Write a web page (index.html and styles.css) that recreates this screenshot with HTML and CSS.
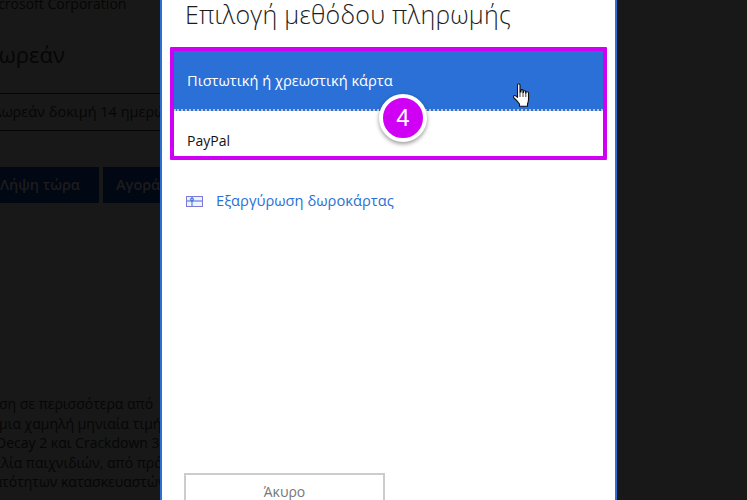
FILE: index.html
```html
<!DOCTYPE html>
<html lang="el">
<head>
<meta charset="utf-8">
<title>Επιλογή μεθόδου πληρωμής</title>
<link rel="stylesheet" href="styles.css">
</head>
<body>
<div class="screen">
  <div class="backdrop">
    <div class="publisher">Microsoft Corporation</div>
    <div class="price">Δωρεάν</div>
    <div class="trial">Δωρεάν δοκιμή 14 ημερών</div>
    <div class="actions">
      <span class="dark-btn first">Λήψη τώρα</span>
      <span class="dark-btn second">Αγορά</span>
    </div>
    <div class="para">
      <div class="line-a">Απόκτηση σε περισσότερα από</div>
      <div class="line-b">με μια χαμηλή μηνιαία τιμή</div>
      <div class="line-c">Decay 2 και Crackdown 3</div>
      <div class="line-d">ποικιλία παιχνιδιών, από πρό</div>
      <div class="line-e">δυνατότητων κατασκευαστών</div>
    </div>
  </div>
  <main class="dialog">
    <h1 class="title">Επιλογή μεθόδου πληρωμής</h1>
    <div class="methods">
      <div class="method selected">Πιστωτική ή χρεωστική κάρτα</div>
      <div class="method">PayPal</div>
      <div class="badge">4</div>
      <svg class="hand" width="17" height="24" viewBox="0 0 17 24">
        <path d="M4.500 2C4.500.3 7 .3 7 2V9H8V7.500C8 6.300 10 6.300 10 7.500V9.500H10.500V8.500C10.500 7.400 12.600 7.400 12.600 8.500V10H13V9.500C13 8.400 15.500 8.400 15.500 9.800V16.500C15.500 18.500 15 19.500 14.500 21V23.300H6.500V21C5 19 3 16.500 1 15C-.2 13.500 1 12 2.500 12.700C3.200 13 3.900 13.600 4.500 14.300Z" fill="#fff" stroke="#101010" stroke-width="1.100" stroke-linejoin="round"/>
        <path d="M7 9v5M10 9.500v4.500M12.800 10v4" fill="none" stroke="#101010" stroke-width=".8"/>
      </svg>
    </div>
    <a class="gift" href="#">
      <svg class="gift-icon" width="17" height="11" viewBox="0 0 17 11">
        <rect x=".5" y=".5" width="16" height="10" fill="#eef2fb" stroke="#7f78d8"/>
        <path d="M1 5h15M6 1v9" fill="none" stroke="#3a6fd8"/>
        <circle cx="6" cy="3.500" r="1.600" fill="none" stroke="#3a6fd8"/>
      </svg>
      <span>Εξαργύρωση δωροκάρτας</span>
    </a>
    <div class="spacer"></div>
    <button class="cancel" type="button">Άκυρο</button>
  </main>
  <div class="backdrop-right"></div>
</div>
</body>
</html>
```

FILE: styles.css
```css
* { box-sizing: border-box; }
html, body { margin: 0; padding: 0; }
body { font-family: "Open Sans", "Noto Sans", sans-serif; background: #181818; }

.screen {
  width: 747px;
  height: 500px;
  overflow: hidden;
  display: grid;
  grid-template-columns: 160px 457px 130px;
}

.backdrop {
  background: #181818;
  color: #060606;
  overflow: hidden;
  white-space: nowrap;
  display: flex;
  flex-direction: column;
}
.publisher { font-size: 14px; line-height: 20px; margin: -6px 0 0 -18px; }
.price { font-size: 22px; line-height: 28px; margin: 26px 0 0 -14px; }
.trial {
  font-size: 14.5px;
  line-height: 36px;
  height: 38px;
  margin: 25px 0 0 -20px;
  padding-left: 20px;
  border-top: 1px solid #050505;
  border-bottom: 1px solid #050505;
  text-indent: -7px;
}
.actions { display: flex; gap: 4px; margin: 36px 0 0 -20px; }
.dark-btn {
  height: 36px;
  background: #010713;
  color: #1d1d1d;
  font-size: 14.5px;
  font-weight: 600;
  line-height: 35px;
  flex: none;
}
.dark-btn.first { width: 119px; padding-left: 20px; }
.dark-btn.second { width: 80px; padding-left: 13px; }
.para { font-size: 14px; line-height: 19.5px; margin-top: 191px; }
.line-a { margin-left: -50px; }
.line-b { margin-left: -20px; }
.line-c { margin-left: -4px; }
.line-d { margin-left: -33px; }
.line-e { margin-left: -31px; }

.backdrop-right { background: #181818; }

.dialog {
  background: #fff;
  border-left: 2px solid #2a70d6;
  border-right: 2px solid #2a70d6;
  height: 500px;
  display: flex;
  flex-direction: column;
}
.title {
  margin: -6px 0 0 23px;
  font-size: 25px;
  line-height: 40px;
  font-weight: 300;
  color: #1c1c1c;
  letter-spacing: .25px;
  white-space: nowrap;
}
.methods {
  position: relative;
  margin: 13px 8px 0 8px;
  width: 437px;
  height: 113px;
  border: 4px solid #d000f5;
  border-radius: 1px;
  background: #fff;
}
.method {
  height: 45px;
  font-size: 14px;
  line-height: 20px;
  padding: 20px 13px 0 13px;
  color: #111;
}
.method.selected {
  height: 60px;
  background: #2a70d6;
  color: #fff;
  font-size: 14.65px;
  padding-top: 19px;
  border-bottom: 2px dotted #c4c4c4;
}
.badge {
  position: absolute;
  left: 205px;
  top: 43px;
  width: 48px;
  height: 48px;
  border-radius: 50%;
  border: 4px solid #fff;
  background: #d000f5;
  color: #fff;
  font-size: 24px;
  line-height: 40px;
  text-align: center;
  font-family: "Liberation Sans", sans-serif;
  box-shadow: 0 2px 4px rgba(0, 0, 0, .4);
}
.hand { position: absolute; left: 339px; top: 32px; }

.gift {
  display: flex;
  align-items: center;
  gap: 13px;
  margin: 29px 0 0 24px;
  color: #2a70d6;
  font-size: 14.7px;
  line-height: 22px;
  text-decoration: none;
}
.gift-icon { flex: none; margin-top: 3px; }
.spacer { flex: 1; }
.cancel {
  margin: 0 0 -6px 22px;
  width: 201px;
  height: 33px;
  border: 2px solid #ccc;
  background: #fff;
  color: #777;
  font: 14px "Open Sans", "Noto Sans", sans-serif;
  padding: 3px 0 0;
}
```
